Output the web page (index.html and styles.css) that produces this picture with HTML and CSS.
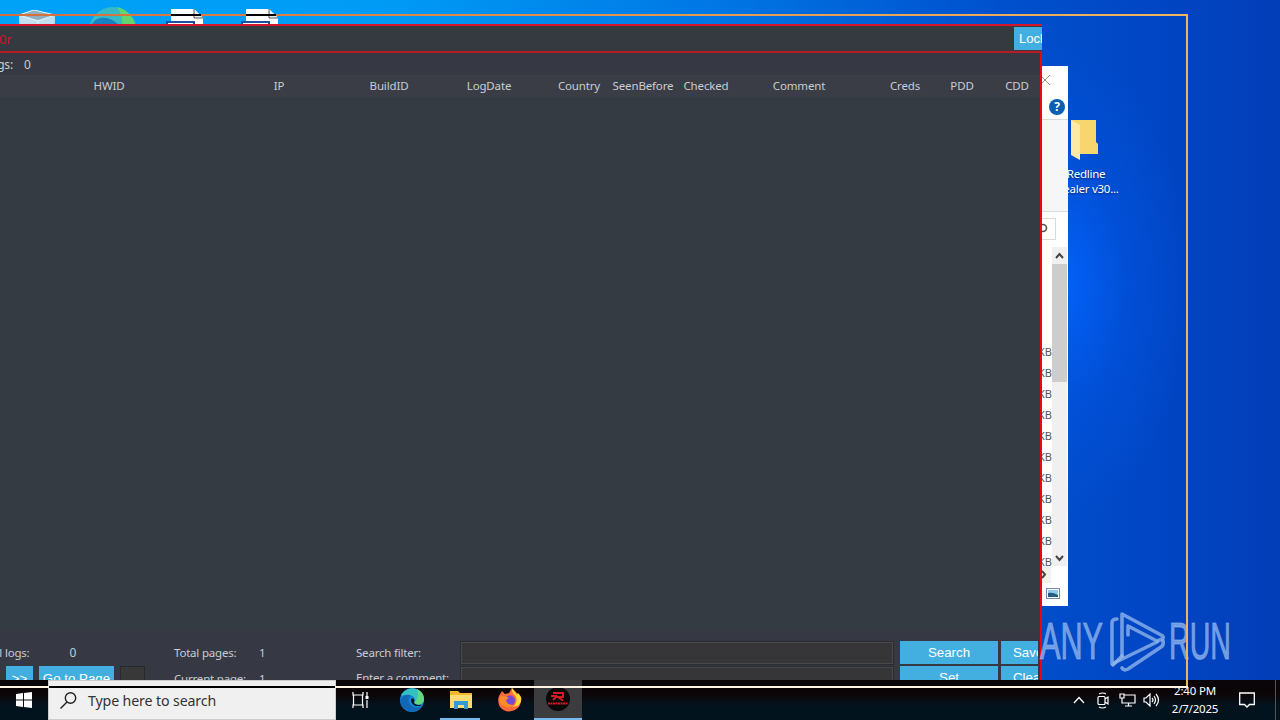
FILE: index.html
```html
<!DOCTYPE html>
<html lang="en">
<head>
    <meta charset="UTF-8">
    <meta name="viewport" content="width=device-width, initial-scale=1.0">
    <title>Desktop</title>
    <link rel="stylesheet" href="styles.css">
</head>
<body>

<div class="desktop">

    <!-- Desktop icons -->
    <svg class="desktop-icon bin" width="40" height="24" viewBox="0 0 40 24">
        <path d="M1 5L16 0L37 5L36 24H2Z" fill="#a9d4ea"/>
        <path d="M1 5L16 0L37 5L20 10Z" fill="#8fb0c2"/>
        <path d="M1 5L20 11L37 6L36 24H2Z" fill="#c3e0ef"/>
        <path d="M1 5L16 0L37 5L20 11ZM20 11V24" stroke="#e6f5fb" stroke-width="1" fill="none"/>
    </svg>
    <svg class="desktop-icon edge" width="48" height="24" viewBox="0 0 48 24">
        <circle cx="24" cy="24" r="24" fill="#37b9c6"/>
        <path d="M28 0Q44 4 48 24H32Q36 10 28 0Z" fill="#62d66d"/>
        <path d="M0 24Q5 7 21 12Q30 15 32 24Z" fill="#1682c4"/>
    </svg>
    <svg class="desktop-icon doc-one" width="40" height="20" viewBox="0 0 40 20">
        <path d="M5 0H28L37 9V20H5Z" fill="#fff"/>
        <path d="M28 0V9H37" fill="#eee" stroke="#555"/>
        <path d="M1 20V13H28V20" fill="#fff" stroke="#1b4fa0" stroke-width="2"/>
    </svg>
    <svg class="desktop-icon doc-two" width="40" height="20" viewBox="0 0 40 20">
        <path d="M5 0H28L37 9V20H5Z" fill="#fff"/>
        <path d="M28 0V9H37" fill="#eee" stroke="#555"/>
        <path d="M1 20V13H28V20" fill="#fff" stroke="#1b4fa0" stroke-width="2"/>
    </svg>
    <div class="folder">
        <svg width="28" height="40" viewBox="0 0 28 40">
            <path d="M0 0H25V22L27 24V34H0Z" fill="#f7d66d"/>
            <path d="M0 0L9 5V40L0 35Z" fill="#ffe9a6"/>
        </svg>
        <div>Redline<br>Stealer v30...</div>
    </div>

    <!-- File explorer behind the panel -->
    <div class="explorer">
        <div class="explorer-title">
            <svg width="10" height="10" viewBox="0 0 10 10"><path d="M0 0L10 10M10 0L0 10" stroke="#999"/></svg>
        </div>
        <div class="explorer-tabs"><span class="help">?</span></div>
        <div class="explorer-ribbon"></div>
        <div class="explorer-address">
            <div class="explorer-search">
                <svg width="10" height="12" viewBox="0 0 10 12"><circle cx="4" cy="5" r="3.5" stroke="#555" stroke-width="1.6" fill="none"/></svg>
            </div>
        </div>
        <div class="explorer-body">
            <div class="sizes">
                <div>KB</div><div>KB</div><div>KB</div><div>KB</div><div>KB</div><div>KB</div>
                <div>KB</div><div>KB</div><div>KB</div><div>KB</div><div>KB</div>
            </div>
            <div class="scrollbar">
                <svg width="15" height="17" viewBox="0 0 15 17"><path d="M4 11L7.500 7L11 11" stroke="#444" stroke-width="2" fill="none"/></svg>
                <div class="thumb"></div>
                <svg width="15" height="17" viewBox="0 0 15 17"><path d="M4 7L7.500 11L11 7" stroke="#444" stroke-width="2" fill="none"/></svg>
            </div>
        </div>
        <div class="explorer-hscroll">
            <svg width="9" height="17" viewBox="0 0 9 17"><path d="M0 5L3 8.500L0 12" stroke="#444" stroke-width="2" fill="none"/></svg>
        </div>
        <div class="explorer-status">
            <svg width="14" height="11" viewBox="0 0 14 11">
                <rect x=".5" y=".5" width="13" height="10" fill="#fff" stroke="#7989a8"/>
                <path d="M2 2H12V9H2Z" fill="#8fcaf0"/>
                <path d="M2 5Q7 4 12 7V9H2Z" fill="#255f83"/>
            </svg>
        </div>
    </div>

    <!-- Log panel -->
    <div class="panel">
        <div class="panel-title">
            <span>0r</span>
            <button class="lock">Lock</button>
        </div>
        <div class="panel-body">
            <div class="log-count"><span>Logs:</span><span>0</span></div>
            <div class="columns">
                <div class="col-first"></div>
                <div>HWID</div>
                <div>IP</div>
                <div>BuildID</div>
                <div>LogDate</div>
                <div>Country</div>
                <div>SeenBefore</div>
                <div>Checked</div>
                <div>Comment</div>
                <div>Creds</div>
                <div>PDD</div>
                <div class="col-last">CDD</div>
            </div>
            <div class="rows"></div>
            <div class="footer">
                <div class="footer-left">
                    <div class="total"><span>Total logs:</span><span>0</span></div>
                    <div class="pager">
                        <button>&gt;&gt;</button>
                        <button>Go to Page</button>
                        <div class="page-input"></div>
                    </div>
                </div>
                <div class="pages">
                    <span>Total pages:</span><span>1</span>
                    <span>Current page:</span><span>1</span>
                </div>
                <div class="filters">
                    <span>Search filter:</span><div class="field"></div><button>Search</button><button class="cut">Save</button>
                    <span>Enter a comment:</span><div class="field"></div><button>Set</button><button class="cut">Clear</button>
                </div>
            </div>
        </div>
    </div>

    <!-- Watermark -->
    <div class="watermark">
        <span class="any">ANY</span>
        <svg width="58" height="64" viewBox="0 0 58 64" fill="none" stroke="currentColor" stroke-width="3.6" stroke-linejoin="round" stroke-linecap="round">
            <path d="M12 47V5L52 26.500Q55 29 51 30.500L47 32L18 17V26"/>
            <path d="M7 10Q2 10 2 14V55L47 33"/>
            <path d="M3 56L12 47M12 59Q14 62 18 60L51 38Q54 36 53 32"/>
        </svg>
        <span class="run">RUN</span>
    </div>

    <div class="taskbar">
        <div class="start">
            <svg width="16" height="16" viewBox="0 0 16 16" fill="#fff">
                <path d="M0 2L7 1V7.500H0ZM8 1L16 0V7.500H8ZM0 8.500H7V15L0 14ZM8 8.500H16V16L8 15Z"/>
            </svg>
        </div>
        <div class="search">
            <svg width="17" height="17" viewBox="0 0 17 17" fill="none" stroke="#222" stroke-width="1.400"><circle cx="10.500" cy="6" r="5.200"/><path d="M7 10L.5 16.500"/></svg>
            <span>Type here to search</span>
        </div>
        <div class="task view">
            <svg width="17" height="16" viewBox="0 0 17 16" fill="none" stroke="#fff" stroke-width="1.200">
                <path d="M1 0V3H11V0M1 16V13H11V16M1.500 3V13M10.500 3V13M15 0V4M15 8V16"/><path d="M13.500 4H16.500V7H13.500Z" fill="#fff" stroke="none"/>
            </svg>
        </div>
        <div class="task">
            <svg width="24" height="24" viewBox="0 0 24 24">
                <circle cx="12" cy="12" r="12" fill="#1583d0"/>
                <path d="M1 8C5-2 22-3 24 11C24 17 17 18 14 15C18 10 11 4 1 8Z" fill="#35c1c0"/>
                <path d="M17 1C23 4 24 8 24 11C24 17 17 18 14 15C18 11 19 6 17 1Z" fill="#5fd880"/>
                <path d="M9 9C7 17 14 22 22 18C15 28 2 23 0 13C2 7 8 6 11 8Z" fill="#1268b7"/>
                <path d="M11 11Q15 9 14 15Q17 18 22 16.500L20 18Q11 19 11 11Z" fill="#051421"/>
            </svg>
        </div>
        <div class="task open">
            <svg width="22" height="20" viewBox="0 0 22 20">
                <path d="M0 1H8L10 3H22V18H0Z" fill="#f4b72c"/><path d="M0 5H22V18H0Z" fill="#ffdc72"/>
                <path d="M4 19V11H18V19H14V15H8V19Z" fill="#3499d4"/>
            </svg>
        </div>
        <div class="task">
            <svg width="24" height="24" viewBox="0 0 24 24">
                <path d="M1 8L4 3L7 6L11 5L14 0L19 5L22 7Q25 18 17 22Q8 26 2 19Q-1 13 1 8Z" fill="#ff6a3c"/>
                <path d="M14 0Q13 4 18 9Q20 16 14 19Q25 18 23 9L20 5L19 7Z" fill="#ffd93b"/>
                <circle cx="12" cy="12.500" r="5" fill="#7548d8"/>
                <path d="M1 10Q4 6 11 10L8 12Q9 17 15 17Q11 21 6 18Q1 16 1 10Z" fill="#ff8a2a"/>
            </svg>
        </div>
        <div class="task current">
            <svg width="24" height="24" viewBox="0 0 24 24">
                <circle cx="12" cy="12" r="12" fill="#090909"/>
                <path d="M7 6H17V10H10L7 13M12 10L17 13.500M5 9H11" fill="none" stroke="#d51a25" stroke-width="2"/>
                <path d="M2 16.500H22" stroke="#d51a25" stroke-width="2" stroke-dasharray="2 .5"/>
            </svg>
        </div>
        <div class="tray">
            <svg width="12" height="8" viewBox="0 0 12 8"><path d="M1 7L6 1.500L11 7" fill="none" stroke="#fff" stroke-width="1.300"/></svg>
            <svg width="12" height="17" viewBox="0 0 12 17" fill="none" stroke="#fff" stroke-width="1.200"><rect x="1" y="4.500" width="7" height="8" rx="1"/><path d="M8 7L11 5V12L8 10M2 2Q5.500 0 9 2M2 15Q5.500 17 9 15"/></svg>
            <svg width="17" height="14" viewBox="0 0 17 14" fill="none" stroke="#fff" stroke-width="1.200"><path d="M5 2H16V10H3V5M6 13H13M9.500 10V13M1 1H5V5H1Z"/></svg>
            <svg width="17" height="14" viewBox="0 0 17 14" fill="none" stroke="#fff" stroke-width="1.200"><path d="M1 5H3L7 1V13L3 9H1ZM9 5Q11 7 9 9M11 3Q14 7 11 11M13 1Q18 7 13 13"/></svg>
        </div>
        <div class="clock">2:40 PM<br>2/7/2025</div>
        <div class="notify">
            <svg width="16" height="16" viewBox="0 0 16 16"><path d="M.7 1H15.300V12.500H10.500L8 15L5.500 12.500H.7Z" fill="none" stroke="#fff" stroke-width="1.300"/></svg>
        </div>
    </div>

    <!-- Outline of the window being dragged -->
    <div class="drag-top"></div>
    <div class="drag-right"></div>
    <div class="drag-bottom"></div>
    <div class="drag-search"></div>
    <div class="drag-doc-one"></div>
    <div class="drag-doc-two"></div>
</div>

</body>
</html>
```
FILE: styles.css
```css
* {
    box-sizing: border-box;
}
body {
    margin: 0;
    font-family: "Noto Sans", sans-serif;
    font-size: 12px;
}
svg {
    display: block;
    flex-shrink: 0;
}
button {
    background: #42afe0;
    color: #fff;
    border: none;
    padding: 0;
    font: 13.3px "Liberation Sans", Arial, sans-serif;
    white-space: nowrap;
}
.desktop {
    position: relative;
    width: 1280px;
    height: 720px;
    overflow: hidden;
    background:
        radial-gradient(ellipse 130px 240px at 1060px 285px, #0362fa 0%, rgba(3, 84, 225, 0.6) 50%, transparent 100%),
        linear-gradient(90deg, #00a2f8 0%, #009bf5 30%, #0078e5 55%, #0050cd 78%, #0146c4 90%, #033db8 100%);
}
.desktop-icon {
    position: absolute;
}
.bin {
    left: 18px;
    top: 10px;
}
.edge {
    left: 89px;
    top: 7px;
}
.doc-one {
    left: 166px;
    top: 9px;
}
.doc-two {
    left: 241px;
    top: 9px;
}
.folder {
    position: absolute;
    left: 1046px;
    top: 120px;
    width: 80px;
    color: #fff;
    text-align: center;
    font-size: 11.5px;
    letter-spacing: -0.25px;
    line-height: 15px;
    text-shadow: 0 1px 2px #002a70;
    white-space: nowrap;
}
.folder svg {
    margin: 0 0 6px 25px;
}

/* Explorer */
.explorer {
    position: absolute;
    left: 1000px;
    top: 66px;
    width: 68px;
    height: 540px;
    background: #fff;
    display: flex;
    flex-direction: column;
}
.explorer-title {
    height: 28px;
    padding: 9px 0 0 40px;
}
.explorer-tabs {
    height: 26px;
    padding: 5px 3px;
    border-bottom: 1px solid #dadbdc;
}
.help {
    display: block;
    width: 16px;
    height: 16px;
    margin-left: auto;
    border-radius: 50%;
    background: #0860b2;
    color: #fff;
    font-weight: bold;
    line-height: 16px;
    text-align: center;
}
.explorer-ribbon {
    height: 92px;
    background: #f5f6f7;
    border-bottom: 1px solid #dadbdc;
}
.explorer-address {
    height: 35px;
    padding: 6px 12px 7px 0;
}
.explorer-search {
    height: 22px;
    border: 1px solid #d9d9d9;
    padding: 4px 0 0 38px;
}
.explorer-body {
    height: 319px;
    display: flex;
    justify-content: flex-end;
    padding-right: 1px;
    overflow: hidden;
}
.sizes {
    padding-top: 94px;
    font-size: 11px;
    line-height: 21px;
    color: #555;
}
.scrollbar {
    width: 15px;
    background: #f0f0f0;
    display: flex;
    flex-direction: column;
}
.thumb {
    height: 118px;
    margin-bottom: auto;
    background: #cdcdcd;
}
.explorer-hscroll {
    height: 17px;
    width: 51px;
    padding-left: 42px;
    background: #f0f0f0;
}
.explorer-status {
    padding: 5px 0 0 46px;
}

/* Log panel */
.panel {
    position: absolute;
    left: -60px;
    top: 24px;
    width: 1102px;
    height: 672px;
    color: #c9ccd1;
    background: #353940;
    display: flex;
    flex-direction: column;
}
.panel-title {
    height: 29px;
    border-top: 2px solid #d5152a;
    border-bottom: 2px solid #b81c23;
    padding-left: 59px;
    display: flex;
    align-items: center;
    justify-content: space-between;
    color: #c8182a;
    font-size: 13px;
}
.lock {
    width: 28px;
    height: 23px;
    padding-left: 5px;
    overflow: hidden;
    text-align: left;
    font-size: 13px;
}
.panel-body {
    flex: 1;
    border-right: 2px solid #f0040e;
    overflow: hidden;
}
.log-count {
    height: 22px;
    padding-left: 44px;
    line-height: 24px;
    display: flex;
    gap: 11px;
    letter-spacing: -0.2px;
    background: #363944;
}
.columns {
    height: 22px;
    line-height: 22px;
    display: grid;
    grid-template-columns: 70px 198px 142px 78px 122px 58px 70px 56px 130px 82px 32px 1fr;
    text-align: center;
    background: #3a3d45;
    font-size: 11.5px;
    letter-spacing: -0.15px;
}
.col-last {
    padding-left: 16px;
}
.rows {
    height: 533px;
    background: #343b43;
}
.footer {
    height: 66px;
    padding: 10px 0 0 36px;
    background: #363944;
    display: flex;
    font-size: 11.5px;
    letter-spacing: -0.2px;
}
.footer button {
    letter-spacing: 0;
}
.footer-left {
    width: 198px;
    flex-shrink: 0;
}
.total {
    height: 26px;
    line-height: 26px;
    padding-left: 1px;
    display: flex;
    gap: 38px;
}
.total span:last-child {
    padding-left: 2px;
    font-size: 12px;
}
.pager {
    display: flex;
    gap: 6px;
    padding-left: 30px;
}
.pager button {
    width: 75px;
    height: 24px;
}
.pager button:first-child {
    width: 27px;
}
.page-input {
    width: 25px;
    height: 24px;
    border: 1px solid #292929;
    background: #383838;
}
.pages {
    width: 182px;
    flex-shrink: 0;
    display: grid;
    grid-template-columns: 85px 1fr;
    grid-auto-rows: 26px;
    line-height: 26px;
    align-content: start;
}
.filters {
    flex-shrink: 0;
    display: grid;
    grid-template-columns: 101px 437px 98px 37px;
    grid-auto-rows: 23px;
    column-gap: 3px;
    row-gap: 2px;
    padding-top: 1px;
    align-content: start;
    line-height: 24px;
    white-space: nowrap;
}
.filters .field {
    margin: 1px 4px 0 1px;
    border: 1px solid #4a4a4c;
    outline: 1px solid #2b2c30;
    background: #363638;
}
.cut {
    padding-left: 12px;
    overflow: hidden;
    text-align: left;
}

/* Watermark */
.watermark {
    position: absolute;
    left: 1040px;
    top: 609px;
    height: 64px;
    display: flex;
    align-items: center;
    color: rgba(150, 185, 238, 0.75);
    font: 52px "Liberation Sans", sans-serif;
}
.any, .run {
    width: 62px;
    transform: scaleX(0.59);
    transform-origin: left;
    -webkit-text-stroke: 1.2px rgba(150, 185, 238, 0.6);
}
.run {
    transform: scaleX(0.55);
}
.watermark svg {
    margin: 0 1px 0 8px;
}

/* Taskbar */
.taskbar {
    position: absolute;
    left: 0;
    top: 680px;
    width: 1280px;
    height: 40px;
    display: flex;
    color: #fff;
    background: linear-gradient(180deg, #080508 0%, #0d0508 35%, #03131d 65%, #03131d 100%);
}
.start {
    width: 48px;
    display: grid;
    place-items: center;
}
.search {
    width: 288px;
    background: #f0f0f0;
    border: 1px solid #ccc;
    color: #333;
    display: flex;
    align-items: center;
    gap: 11px;
    padding-left: 11px;
    font-size: 14.2px;
    letter-spacing: -0.13px;
}
.task {
    width: 49px;
    display: grid;
    place-items: center;
}
.view {
    width: 51px;
    padding-right: 3px;
}
.open {
    background: linear-gradient(#76b9ed, #76b9ed) 4px 38px / 40px 2px no-repeat;
}
.current {
    width: 48px;
    background: #3c3c3f;
    border-bottom: 2px solid #76b9ed;
}
.tray {
    margin-left: auto;
    display: grid;
    grid-template-columns: repeat(4, 24px);
    place-items: center;
}
.clock {
    width: 64px;
    text-align: center;
    font-size: 11.5px;
    letter-spacing: -0.2px;
    line-height: 18px;
    padding-top: 2px;
}
.notify {
    width: 49px;
    padding-right: 9px;
    display: grid;
    place-items: center;
    border-right: 1px solid #555;
    margin-right: 4px;
}

/* Drag outline */
.drag-top {
    position: absolute;
    top: 14px;
    left: 0;
    width: 1188px;
    height: 2px;
    background: linear-gradient(90deg, #d56e3c, #f0b65d);
}
.drag-right {
    position: absolute;
    top: 14px;
    left: 1186px;
    width: 2px;
    height: 674px;
    background: #eeb65d;
}
.drag-bottom {
    position: absolute;
    top: 686px;
    left: 0;
    width: 1188px;
    height: 2px;
    background: #fff5e6;
}
.drag-search {
    position: absolute;
    top: 686px;
    left: 49px;
    width: 286px;
    height: 2px;
    background: #000;
}
.drag-doc-one, .drag-doc-two {
    position: absolute;
    top: 14px;
    left: 171px;
    width: 30px;
    height: 2px;
    background: #000;
}
.drag-doc-two {
    left: 246px;
}
```
